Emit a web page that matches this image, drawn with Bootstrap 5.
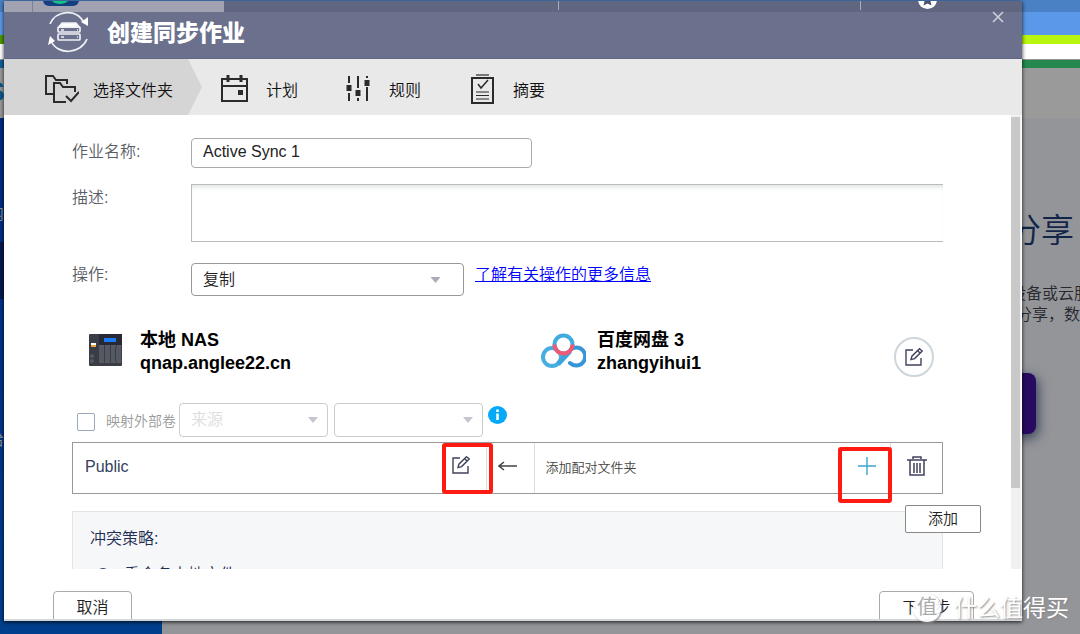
<!DOCTYPE html>
<html lang="zh-CN">
<head>
<meta charset="utf-8">
<meta name="viewport" content="width=device-width, initial-scale=1">
<title>创建同步作业</title>
<link rel="stylesheet" href="https://cdn.jsdelivr.net/npm/bootstrap@5.3.0/dist/css/bootstrap.min.css">
<style>
body{font-family:"Liberation Sans","Noto Sans CJK SC",sans-serif;font-size:16px;font-weight:350;line-height:24px;color:#222;background:#949599;overflow:hidden}
button,input,select,textarea{font-weight:inherit}
/* page behind the dialog */
.backdrop-page{inset:0;overflow:hidden}
.bd{position:absolute}
.bd-top{inset:0 0 auto 0;height:12px;background:#4a80c4}
.bd-sky{inset:12px 0 auto 0;height:23px;background:#5c98ea}
.bd-lime{inset:35px 0 auto 0;height:9px;background:linear-gradient(90deg,#4c9a00 5%,#b8f50f 5%)}
.bd-white{inset:44px 0 auto 0;height:15px;background:#fff}
.bd-green{inset:60px 0 auto 0;height:8px;background:linear-gradient(90deg,#135d93 5%,#24884f 5%)}
.bd-grey{inset:68px 0 auto 0;height:50px;background:#9a9a9a}
.bd-side{left:0;top:118px;bottom:0;width:162px;background:linear-gradient(#002a80,#003f8c)}
.bd-side-dark{left:0;top:242px;width:162px;height:57px;background:#06194f}
.bd-logo{left:-14px;top:80px;font-size:28px;font-weight:700;color:#0a5694}
.bd-menu{left:-12px;color:#9a9a90}
.bd-h{left:1008px;top:212px;font-size:33px;line-height:38px;color:#122549;white-space:nowrap}
.bd-p{top:282px;color:#26282d;white-space:nowrap}
.bd-btn{left:900px;top:373px;width:136px;height:61px;border-radius:8px;background:#280a60;box-shadow:2px 4px 12px #344058}
/* dialog */
.sync-dialog{margin:1px 58px 13px 4px;height:calc(100vh - 14px);background:#fff;box-shadow:0 1px 4px rgba(0,0,0,.85);border-bottom:2px solid #d3d7da}
.dlg-head{height:58px;background:#6b718d;color:#fff;border-bottom:1px solid #62678a;padding-left:42px;flex:none}
.glass{inset:0 0 auto 0;height:11px;background:#60667f;overflow:hidden}
.glass-tab{left:0;top:0;width:220px;height:11px;background:#a0a2b2}
.glass-app{left:39px;top:-9px;width:36px;height:14px;border-radius:6px;background:#163f82;overflow:hidden}
.glass-app i{position:absolute;left:8px;top:0;width:18px;height:12px;border-radius:50%;background:#12c480}
.glass-line{top:0;width:1px;height:9px;background:#a6abbd}
.dlg-title{font-size:23px;line-height:30px;font-weight:900;margin:0 0 0 17px;padding-top:6px}
.dlg-close{right:16px;top:8px;width:16px;height:16px;line-height:0;color:#cdd0da}
.steps{height:56px;background:#e9e9e9;flex:none;color:#111}
.step-item{background:none;border:0;padding:3px 0 0 0;color:#111;gap:14px}
.step-item span{padding-top:4px}
.step-on{background:#d5d5d5;width:198px;padding-left:40px;clip-path:polygon(0 0,184px 0,100% 50%,184px 100%,0 100%)}
.dlg-body{flex:1 1 0;min-height:0;overflow:hidden}
.pane{padding:23px 68px 0 68px;overflow:hidden;min-height:0;height:100%}
.track{width:10px;background:#f1f1f1;margin-right:1px;padding-top:2px}
.thumb{height:82%;width:9px;background:#c8c8c8}
.row-f{display:grid;grid-template-columns:119px 1fr}
.row-f label{color:#5a5d65;padding-top:2px}
.box{border:1px solid #aaa;border-radius:4px;color:#222;padding:0 11px;background-color:#fff}
.box-name{height:30px;width:341px;padding-bottom:2px}
.box-desc{height:58px;width:100%;border-color:#bbb;border-right:0;border-radius:0;resize:none;box-shadow:inset 0 5px 5px -3px #dde2e2;display:block}
.sel-wrap{position:relative}
.sel-wrap svg{position:absolute;right:23px;top:50%;margin-top:-3px;pointer-events:none}
.sel-wrap .box{appearance:none}
.box-op{width:273px;height:33px;border-color:#999}
.box-map{width:149px;height:34px;border-color:#ccc;color:#ddd;opacity:1}
.more{color:#00f}
.pair-grid{display:grid;grid-template-columns:469fr 402fr}
.who{font-size:18px;line-height:23px;font-weight:700;color:#000}
.edit-round{width:40px;height:40px;border:2px solid #cdd6da;border-radius:50%;background:#fff;padding:0}
.tick{appearance:none;width:18px;height:18px;border:1px solid #9aa8bc;border-radius:2px;background:#fff;margin:3px 11px 0 5px}
.map-label{font-size:14px;color:#999;width:73px;white-space:nowrap;padding-top:2px}
.pairs{width:100%;table-layout:fixed;border:1px solid #999;border-collapse:separate;border-spacing:0}
.pairs td{height:50px;padding:0;vertical-align:middle}
.pairs td+td{border-left:1px solid #ddd}
.pairs col:nth-child(2){width:48px}
.pairs col:nth-child(3){width:47%}
.plain{background:none;border:0;padding:0;line-height:0}
.folder{color:#33415f}
.hint{font-size:13px;color:#444}
.mark-red{border:4px solid #ff1a12;border-radius:3px;pointer-events:none;z-index:2}
.mark-a{right:-7px;top:0;width:51px;height:51px}
.mark-b{right:-2px;top:4px;width:54px;height:56px}
.policy{margin-top:17px;border:1px solid #e2e4e6;background:#f5f7f9;padding:15px 17px;color:#1f2e50;height:120px}
.policy .tick-r{appearance:none;width:14px;height:14px;border:1px solid #33415f;border-radius:50%;margin:0 14px 0 6px}
.btn-add{right:-38px;top:63px;width:76px;height:28px;font-size:15px;line-height:24px;border:1px solid #888;border-radius:2px;background:#fff;color:#222;padding:0;z-index:2}
.dlg-foot{height:50px;flex:none;padding:22px 48px 0 49px;overflow:hidden}
.btn-flat{height:36px;border:1px solid #aaa;border-radius:4px;background:#fff;color:#222;padding:0 0 3px}
.wm{right:11px;bottom:11px;color:#fff;font-size:23px;font-weight:400;line-height:30px;text-shadow:1px 1px 2px #888;z-index:5}
.wm-dot{width:28px;height:28px;border-radius:50%;background:rgba(255,255,255,.9);color:#aaa;font-size:20px;line-height:26px;text-align:center;box-shadow:1px 1px 2px #888;text-shadow:none}
</style>
<script src="https://cdn.jsdelivr.net/npm/bootstrap@5.3.0/dist/js/bootstrap.bundle.min.js"></script>
</head>
<body>
<svg width="0" height="0" class="position-absolute" aria-hidden="true">
 <symbol id="pen" viewBox="0 0 20 20"><g fill="none" stroke="#40425c" stroke-width="1.4"><path d="M9 3H2v15h15v-7"/><path d="M15.5 1.8l2.7 2.2-7.6 7.6-3.6 1 .9-3.4zM14 4l2 2"/></g></symbol>
 <symbol id="tri" viewBox="0 0 10 6"><path d="M0 0h10L5 6z" fill="currentColor"/></symbol>
</svg>

<div class="backdrop-page position-absolute">
 <div class="bd bd-top"></div><div class="bd bd-sky"></div><div class="bd bd-lime"></div><div class="bd bd-white"></div><div class="bd bd-green"></div><div class="bd bd-grey"></div>
 <div class="bd bd-side"></div><div class="bd bd-side-dark"></div>
 <div class="bd bd-logo">S</div>
 <div class="bd bd-menu" style="top:202px">内</div>
 <div class="bd bd-menu" style="top:428px">给</div>
 <div class="bd bd-h">分享</div>
 <div class="bd bd-p" style="left:1010px">设备或云服</div>
 <div class="bd bd-p" style="left:1016px;top:303px">分享，数</div>
 <div class="bd bd-btn"></div>
</div>

<main class="sync-dialog position-relative d-flex flex-column">
 <header class="dlg-head position-relative d-flex align-items-center">
  <div class="glass position-absolute">
   <div class="glass-tab position-absolute"></div>
   <div class="glass-line position-absolute" style="left:28px;height:11px;background:#7d8096"></div>
   <div class="glass-app position-absolute"><i></i></div>
   <div class="glass-line position-absolute" style="left:554px"></div>
   <div class="glass-line position-absolute" style="left:856px"></div>
   <svg class="position-absolute" style="left:914px;top:-11px" width="19" height="19"><circle cx="9.500" cy="9.500" r="9.500" fill="#fff"/><path d="M9.500 4l2 4 4 .5-3 3 1 4-4-2-4 2 1-4-3-3 4-.5z" fill="#4b516e"/></svg>
  </div>
  <svg class="position-relative mt-1" width="44" height="42" viewBox="0 0 44 42" fill="none" stroke="#eef0f5" stroke-width="1.700"><path d="M4 13C10-1 31-3 38 12M41 28C35 43 12 45 5 30"/><path d="M35 11l7 4 0-9zM2 34l2-9 5 5z" fill="#fff" stroke="none"/><path d="M12 17l4-5h14l4 5" fill="#fff"/><rect x="12" y="16" width="22" height="5" rx="1"/><rect x="12" y="23" width="22" height="6" rx="1"/><path d="M15 19h3M15 26h3M31 19h1M31 26h1" stroke-width="1.500"/></svg>
  <h1 class="dlg-title">创建同步作业</h1>
  <button type="button" class="dlg-close plain position-absolute" aria-label="关闭"><svg width="12" height="12"><path d="M1 1l10 10M11 1L1 11" stroke="currentColor" stroke-width="1.600"/></svg></button>
 </header>

 <nav class="steps d-flex">
  <button type="button" class="step-item step-on d-flex align-items-center">
   <svg width="35" height="30" viewBox="0 0 35 30" fill="none" stroke="#2b2b2b" stroke-width="2"><path d="M9 20H2V2h7l3 4h11v4"/><path d="M22 28H10V9h6l3 4h12v5"/><path d="M22 22l5 5 8-9"/></svg><span>选择文件夹</span></button>
  <button type="button" class="step-item d-flex align-items-center" style="margin-left:19px;gap:18px">
   <svg width="27" height="27" viewBox="0 0 27 27" fill="none" stroke="#2b2b2b" stroke-width="2"><rect x="1" y="4" width="25" height="22"/><path d="M1 11h25"/><path d="M7 0v7M20 0v7" stroke-width="3"/><path d="M17 15h5v5h-5z" fill="#2b2b2b" stroke="none"/></svg><span>计划</span></button>
  <button type="button" class="step-item d-flex align-items-center" style="margin-left:48px;gap:19px">
   <svg width="24" height="26" viewBox="0 0 24 26" stroke="#2b2b2b" stroke-width="2"><path d="M3 0v7M3 17v8M12 0v12M12 22v3M21 0v2M21 11v14"/><path d="M3 9v6M12 14v6M21 4v6" stroke-width="5"/></svg><span>规则</span></button>
  <button type="button" class="step-item d-flex align-items-center" style="margin-left:49px;gap:18px">
   <svg width="25" height="30" viewBox="0 0 25 30" fill="none" stroke="#2b2b2b"><rect x="2" y="4" width="21" height="25" stroke-width="2"/><path d="M6 1h13" stroke-width="2" stroke="#777"/><path d="M8 10l3 4 7-8" stroke-width="1.500"/><path d="M6 18h13M6 21.500h13M6 25h13" stroke-width="1.200"/></svg><span>摘要</span></button>
 </nav>

 <div class="dlg-body d-flex">
  <form class="pane flex-grow-1">
   <div class="row-f"><label for="jn">作业名称:</label><input id="jn" class="box box-name" value="Active Sync 1"></div>
   <div class="row-f mt-3"><label for="ds">描述:</label><textarea id="ds" class="box box-desc"></textarea></div>
   <div class="row-f" style="margin-top:21px"><label for="op" class="pt-0">操作:</label>
    <div class="d-flex">
     <div class="sel-wrap"><select id="op" class="box box-op"><option>复制</option></select><svg width="11" height="6" color="#a9acba"><use href="#tri"/></svg></div>
     <a class="more" style="margin-left:11px" href="#">了解有关操作的更多信息</a>
    </div></div>

   <div class="pair-grid" style="margin-top:33px">
    <div class="d-flex ps-3">
     <svg class="mt-1" width="35" height="34" viewBox="0 0 35 34"><rect x="1" y="1" width="33" height="32" rx="1" fill="#3b3d46"/><path d="M11 1h23v11H11z" fill="#272a34"/><rect x="16" y="5" width="12" height="4" fill="#1c7cf5"/><path d="M3 10h5v2H3z" fill="#fff"/><path d="M3 12h5v2H3z" fill="#e3a13a"/><g fill="#555962"><path d="M11 14h5v14h-5zM17 14h5v14h-5zM23 14h4v14h-4zM28 14h5v14h-5z"/><circle cx="4" cy="23" r="2"/><circle cx="4" cy="28" r="2"/></g><path d="M11 13h22M11 29h22" stroke="#777a82" stroke-dasharray="5 1"/></svg>
     <div class="who" style="margin-left:17px">本地 NAS<br>qnap.anglee22.cn</div>
    </div>
    <div class="d-flex">
     <svg style="margin-top:4px" width="45" height="36" viewBox="0 0 45 36" fill="none" stroke-width="4"><circle cx="11" cy="24" r="9" stroke="#48aee0"/><path d="M17 31l12-13" stroke="#3ca4dc" stroke-width="5"/><path d="M29 17a9 9 0 1 1 0 13" stroke="#3796d8" stroke-linecap="round"/><circle cx="22.500" cy="11.500" r="9" fill="#fff" stroke="#3fabdf"/><path d="M13.500 11.500a9 9 0 0 0 18 0" stroke="#f05a76"/></svg>
     <div class="who flex-grow-1" style="margin-left:11px">百度网盘 3<br>zhangyihui1</div>
     <button type="button" class="edit-round d-flex align-items-center justify-content-center mt-2" style="margin-right:9px" aria-label="编辑账户"><svg width="20" height="20"><use href="#pen"/></svg></button>
    </div>
   </div>

   <div class="d-flex align-items-center" style="margin-top:26px">
    <input type="checkbox" id="mp" class="tick"><label for="mp" class="map-label">映射外部卷</label>
    <div class="sel-wrap"><select class="box box-map" disabled aria-label="来源"><option>来源</option></select><svg style="right:10px" width="10" height="6" color="#c3c6d2"><use href="#tri"/></svg></div>
    <div class="sel-wrap" style="margin-left:6px"><select class="box box-map" disabled aria-label="目标"><option></option></select><svg style="right:10px" width="10" height="6" color="#c3c6d2"><use href="#tri"/></svg></div>
    <svg class="align-self-start" style="margin:3px 0 0 5px" width="19" height="18"><ellipse cx="9.500" cy="9" rx="9.500" ry="9" fill="#04a9f8"/><path d="M9.500 3.500v2.500M9.500 7.500v6.500" stroke="#fff" stroke-width="2.500" fill="none"/></svg>
   </div>

   <div class="position-relative" style="margin-top:5px">
    <table class="pairs">
     <colgroup><col><col><col></colgroup>
     <tr>
      <td class="position-relative"><div class="d-flex align-items-center justify-content-between" style="padding:0 15px 2px 12px"><span class="folder">Public</span><button type="button" class="plain pb-1" aria-label="编辑文件夹"><svg width="20" height="20"><use href="#pen"/></svg></button></div><div class="mark-red mark-a position-absolute"></div></td>
      <td><svg class="d-block" style="margin:-4px 0 0 11px" width="20" height="10" fill="none" stroke="#444" stroke-width="1.500"><path d="M19 5H1M6 1L1 5l5 4"/></svg></td>
      <td><div class="d-flex align-items-center"><span class="hint flex-grow-1" style="margin-left:11px">添加配对文件夹</span>
       <div class="position-relative align-self-stretch d-flex align-items-center" style="width:50px;height:50px;border-right:1px solid #ddd;padding-left:17px"><button type="button" class="plain pb-1" aria-label="添加文件夹"><svg width="18" height="18"><path d="M9 0v18M0 9h18" stroke="#3ba3cf" stroke-width="1.400"/></svg></button><div class="mark-red mark-b position-absolute"></div></div>
       <div class="d-flex justify-content-center" style="width:51px"><button type="button" class="plain pb-1" aria-label="删除"><svg width="20" height="21" fill="none" stroke="#40425c" stroke-width="1.500"><path d="M0 4h20M6 3V1h8v2M3 4v15h14V4M7 7v10M10 7v10M13 7v10"/></svg></button></div></div></td>
     </tr>
    </table>
    <button type="button" class="btn-add position-absolute">添加</button>
   </div>

   <div class="policy">
    <div>冲突策略:</div>
    <div class="d-flex align-items-center" style="margin-top:12px"><input type="radio" class="tick-r" id="r1"><label for="r1">重命名本地文件</label></div>
   </div>
  </form>
  <div class="track flex-shrink-0"><div class="thumb"></div></div>
 </div>

 <footer class="dlg-foot d-flex justify-content-between">
  <button type="button" class="btn-flat" style="width:79px">取消</button>
  <button type="button" class="btn-flat" style="width:95px">下一步</button>
 </footer>
</main>
<div class="wm position-absolute d-flex align-items-center"><span class="wm-dot">值</span><span style="margin-left:13px">什么值得买</span></div>
</body>
</html>
